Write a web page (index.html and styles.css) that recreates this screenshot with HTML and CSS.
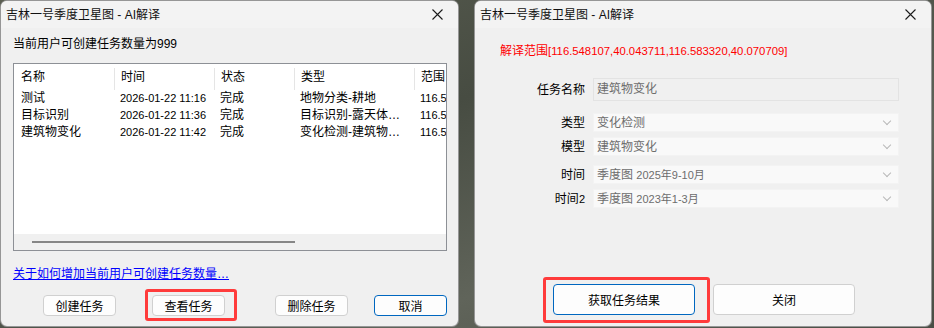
FILE: index.html
```html
<!DOCTYPE html>
<html lang="zh-CN">
<head>
    <meta charset="UTF-8">
    <meta name="viewport" content="width=device-width, initial-scale=1.0">
    <title>AI解译</title>
    <link rel="stylesheet" href="styles.css">
</head>
<body>
<div class="desk">
    <!-- task list dialog -->
    <div class="window win-list">
        <div class="titlebar">
            <span class="title">吉林一号季度卫星图 - AI解译</span>
            <svg class="close" width="11" height="11" viewBox="0 0 11 11"><path d="M0.5 0.5L10.5 10.5M10.5 0.5L0.5 10.5" stroke="#1b1b1b" stroke-width="1.1" fill="none"/></svg>
        </div>
        <div class="body">
            <div class="quota">当前用户可创建任务数量为999</div>
            <div class="list">
                <div class="list-view">
                    <div class="row head">
                        <span>名称</span><span class="sep">时间</span><span class="sep">状态</span><span class="sep">类型</span><span class="sep">范围</span>
                    </div>
                    <div class="row">
                        <span>测试</span><span class="num">2026-01-22 11:16</span><span>完成</span><span>地物分类-耕地</span><span class="num">116.548107</span>
                    </div>
                    <div class="row">
                        <span>目标识别</span><span class="num">2026-01-22 11:36</span><span>完成</span><span>目标识别-露天体…</span><span class="num">116.548107</span>
                    </div>
                    <div class="row">
                        <span>建筑物变化</span><span class="num">2026-01-22 11:42</span><span>完成</span><span>变化检测-建筑物…</span><span class="num">116.548107</span>
                    </div>
                </div>
                <div class="hscroll"><div class="thumb"></div></div>
            </div>
            <a class="link" href="#">关于如何增加当前用户可创建任务数量…</a>
            <div class="buttons">
                <button class="btn">创建任务</button>
                <button class="btn b2">查看任务</button>
                <button class="btn b3">删除任务</button>
                <button class="btn b4 focus">取消</button>
            </div>
        </div>
        <div class="mark mark-left"></div>
    </div>

    <!-- task detail dialog -->
    <div class="window win-detail">
        <div class="titlebar">
            <span class="title">吉林一号季度卫星图 - AI解译</span>
            <svg class="close" width="11" height="11" viewBox="0 0 11 11"><path d="M0.5 0.5L10.5 10.5M10.5 0.5L0.5 10.5" stroke="#1b1b1b" stroke-width="1.1" fill="none"/></svg>
        </div>
        <div class="body">
            <div class="range">解译范围<span class="range-num">[116.548107,40.043711,116.583320,40.070709]</span></div>
            <div class="form">
                <div class="field f-name">
                    <label>任务名称</label>
                    <div class="input">建筑物变化</div>
                </div>
                <div class="field f-type">
                    <label>类型</label>
                    <div class="select">变化检测<i class="chev"></i></div>
                </div>
                <div class="field f-model">
                    <label>模型</label>
                    <div class="select">建筑物变化<i class="chev"></i></div>
                </div>
                <div class="field f-time">
                    <label>时间</label>
                    <div class="select">季度图 <span class="lat">2025年9-10月</span><i class="chev"></i></div>
                </div>
                <div class="field f-time2">
                    <label>时间<span class="lat">2</span></label>
                    <div class="select">季度图 <span class="lat">2023年1-3月</span><i class="chev"></i></div>
                </div>
            </div>
            <div class="buttons wide">
                <button class="btn big focus">获取任务结果</button>
                <button class="btn big">关闭</button>
            </div>
        </div>
        <div class="mark mark-right"></div>
    </div>
</div>
</body>
</html>
```

FILE: styles.css
```css
* {
    box-sizing: border-box;
}

html, body {
    margin: 0;
    height: 100%;
}

body {
    background: linear-gradient(160deg, #5b5f52 0%, #474c42 40%, #60645a 70%, #4a4e45 100%);
    font-family: "Liberation Sans", "Noto Sans CJK SC", sans-serif;
    font-size: 12px;
    color: #000;
}

.desk {
    display: flex;
    gap: 15px;
    height: 327px;
}

.window {
    position: relative;
    display: flex;
    flex-direction: column;
    height: 327px;
    background: #f0f0f0;
    border: 1px solid rgba(40, 40, 40, 0.45);
    border-radius: 7px;
    overflow: hidden;
}

.win-list {
    width: 459px;
}

.win-detail {
    width: 458px;
}

.titlebar {
    display: flex;
    align-items: center;
    justify-content: space-between;
    height: 27px;
    padding: 0 15px 0 5px;
    background: #f3f3f3;
    flex: none;
}

.title {
    line-height: 16px;
    color: #111;
}

.body {
    display: flex;
    flex-direction: column;
    flex: 1;
}

/* left dialog */
.win-list .body {
    padding: 0 11px 10px 12px;
}

.quota {
    margin-top: 8px;
    line-height: 16px;
}

.list {
    display: flex;
    flex-direction: column;
    margin-top: 11px;
    height: 188px;
    border: 1px solid #8d9096;
    background: #fff;
    overflow: hidden;
}

.list-view {
    flex: 1;
    overflow: hidden;
}

.row {
    display: grid;
    grid-template-columns: 100px 100px 80px 120px 100px;
    height: 17px;
    line-height: 17px;
    white-space: nowrap;
}

.row span {
    padding-left: 7px;
    overflow: hidden;
}

.row .num {
    font-size: 11px;
}

.row.head {
    height: 26px;
    padding-top: 4px;
    line-height: 19px;
}

.row.head .sep {
    border-left: 1px solid #e5e5e5;
    padding-left: 6px;
}

.row:not(.head) span:nth-child(n+2) {
    padding-left: 6px;
}

.hscroll {
    position: relative;
    flex: none;
    height: 16px;
    background: #f0f0f0;
}

.thumb {
    position: absolute;
    left: 18px;
    top: 7px;
    width: 263px;
    height: 2px;
    background: #868686;
}

.link {
    margin-top: 15px;
    line-height: 16px;
    color: #0000ff;
    align-self: flex-start;
}

.buttons {
    display: flex;
    margin-top: auto;
    padding-left: 30px;
}

.btn {
    width: 73px;
    height: 21px;
    padding: 0;
    font-family: inherit;
    font-size: 12px;
    color: #000;
    background: #fdfdfd;
    border: 1px solid #d0d0d0;
    border-radius: 4px;
}

.btn.focus {
    border: 1px solid #0067c0;
}

.b2 {
    margin-left: 36px;
}

.b3 {
    margin-left: 50px;
}

.b4 {
    margin-left: 26px;
}

/* right dialog */
.win-detail .body {
    padding: 0 0 11px 0;
}

.range {
    margin-top: 15px;
    padding-left: 25px;
    line-height: 16px;
    color: #ff0000;
}

.range-num {
    font-size: 11.3px;
}

.form {
    margin-top: 19px;
}

.field {
    display: flex;
    align-items: center;
}

.field label {
    width: 110px;
    text-align: right;
    margin-right: 8px;
    line-height: 16px;
}

.input, .select {
    position: relative;
    width: 306px;
    padding-left: 3px;
    color: #6d6d6d;
    line-height: 17px;
}

.input {
    height: 23px;
    padding-top: 2px;
    border: 1px solid #e3e3e3;
    background: #f0f0f0;
}

.select {
    height: 19px;
    padding-top: 1px;
    background: #f9f9f9;
    border: 1px solid #f3f3f3;
}

.lat {
    font-size: 11px;
}

.chev {
    position: absolute;
    right: 8px;
    top: 4px;
    width: 6px;
    height: 6px;
    border-right: 1px solid #b8b8b8;
    border-bottom: 1px solid #b8b8b8;
    transform: rotate(45deg);
}

.f-type {
    margin-top: 12px;
}

.f-model {
    margin-top: 5px;
}

.f-time {
    margin-top: 9px;
}

.f-time2 {
    margin-top: 5px;
}

.buttons.wide {
    padding-left: 78px;
    gap: 18px;
}

.btn.big {
    width: 142px;
    height: 31px;
}

/* red annotation boxes */
.mark {
    position: absolute;
    border: 3px solid #ff3b3b;
    border-radius: 3px;
}

.mark-left {
    left: 144px;
    top: 288px;
    width: 92px;
    height: 32px;
}

.mark-right {
    left: 68px;
    top: 276px;
    width: 167px;
    height: 46px;
}
```
